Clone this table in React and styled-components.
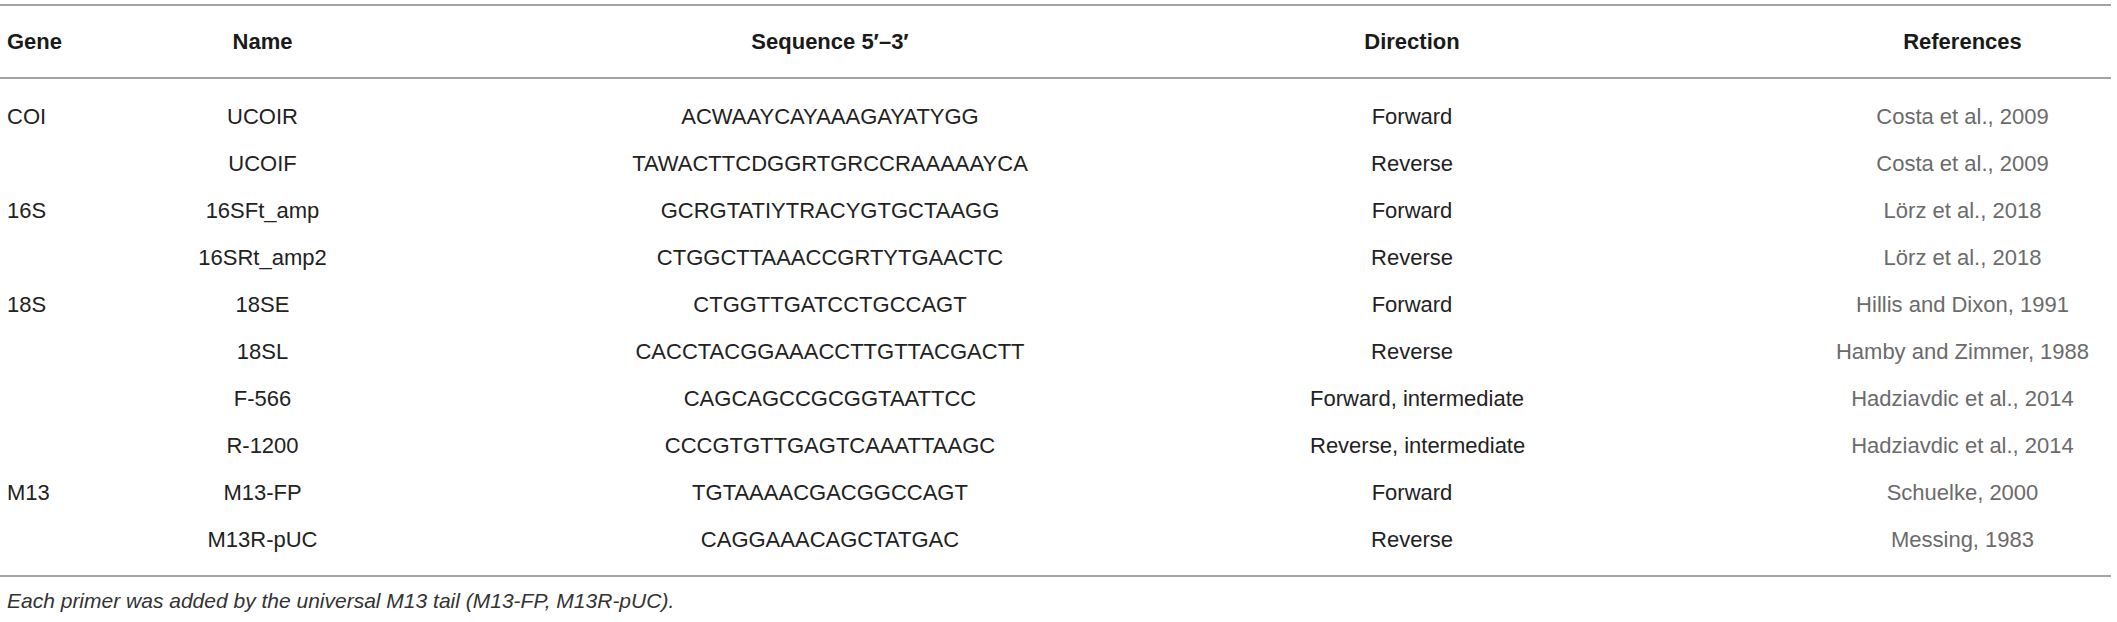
import React from 'react';
import styled, { createGlobalStyle } from 'styled-components';

const GlobalStyle = createGlobalStyle`
    body {
        margin: 0;
        background: #ffffff;
        font-family: "Liberation Sans", Arial, sans-serif;
    }
`;

const Page = styled.div`
    padding: 4px 6px 0 0;
    color: #222222;
`;

const Table = styled.div`
    border-top: 2px solid #a3a3a3;
    border-bottom: 2px solid #a3a3a3;
`;

const Row = styled.div`
    display: grid;
    grid-template-columns: 175px 175px 960px 204px 1fr;
    align-items: center;
    height: ${(p) => (p.$head ? '71px' : '47px')};
    font-size: 22px;
    font-weight: ${(p) => (p.$head ? 700 : 400)};
    color: ${(p) => (p.$head ? '#1a1a1a' : 'inherit')};
`;

const Head = styled.div`
    border-bottom: 2px solid #a3a3a3;
`;

const Body = styled.div`
    padding: 14px 0 12px;
`;

const Cell = styled.div`
    text-align: ${(p) => (p.$left ? 'left' : 'center')};
    padding-left: ${(p) => (p.$left ? '7px' : p.$ref ? '300px' : '0')};
    color: ${(p) => (p.$muted ? '#6b6b6b' : 'inherit')};
    white-space: nowrap;
`;

const Note = styled.p`
    margin: 12px 0 0 7px;
    font-size: 21px;
    font-style: italic;
    color: #333333;
`;

const primers = [
    ['COI', 'UCOIR', 'ACWAAYCAYAAAGAYATYGG', 'Forward', 'Costa et al., 2009'],
    ['', 'UCOIF', 'TAWACTTCDGGRTGRCCRAAAAAYCA', 'Reverse', 'Costa et al., 2009'],
    ['16S', '16SFt_amp', 'GCRGTATIYTRACYGTGCTAAGG', 'Forward', 'Lörz et al., 2018'],
    ['', '16SRt_amp2', 'CTGGCTTAAACCGRTYTGAACTC', 'Reverse', 'Lörz et al., 2018'],
    ['18S', '18SE', 'CTGGTTGATCCTGCCAGT', 'Forward', 'Hillis and Dixon, 1991'],
    ['', '18SL', 'CACCTACGGAAACCTTGTTACGACTT', 'Reverse', 'Hamby and Zimmer, 1988'],
    ['', 'F-566', 'CAGCAGCCGCGGTAATTCC', 'Forward, intermediate', 'Hadziavdic et al., 2014'],
    ['', 'R-1200', 'CCCGTGTTGAGTCAAATTAAGC', 'Reverse, intermediate', 'Hadziavdic et al., 2014'],
    ['M13', 'M13-FP', 'TGTAAAACGACGGCCAGT', 'Forward', 'Schuelke, 2000'],
    ['', 'M13R-pUC', 'CAGGAAACAGCTATGAC', 'Reverse', 'Messing, 1983'],
];

export default function App() {
    return (
        <>
            <GlobalStyle />
            <Page>
                <Table>
                    <Head>
                        <Row $head>
                            <Cell $left>Gene</Cell>
                            <Cell>Name</Cell>
                            <Cell>Sequence 5′–3′</Cell>
                            <Cell>Direction</Cell>
                            <Cell $ref>References</Cell>
                        </Row>
                    </Head>

                    <Body>
                        {primers.map(([gene, name, seq, dir, ref]) => (
                            <Row key={name}>
                                <Cell $left>{gene}</Cell>
                                <Cell>{name}</Cell>
                                <Cell>{seq}</Cell>
                                <Cell>{dir}</Cell>
                                <Cell $ref $muted>{ref}</Cell>
                            </Row>
                        ))}
                    </Body>
                </Table>

                <Note>Each primer was added by the universal M13 tail (M13-FP, M13R-pUC).</Note>
            </Page>
        </>
    );
}
